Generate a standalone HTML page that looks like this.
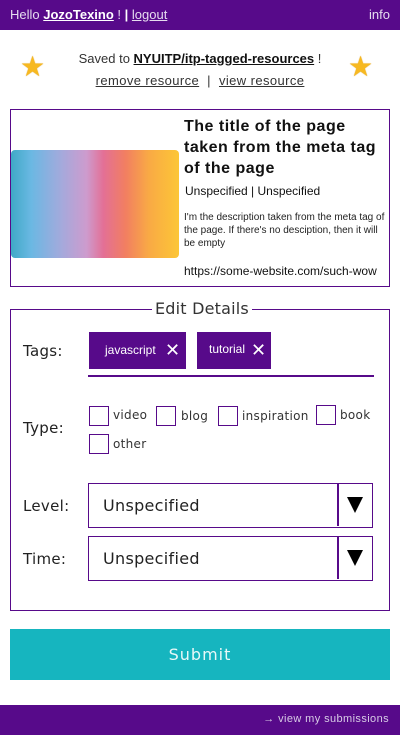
<!DOCTYPE html>
<html><head><meta charset="utf-8"><style>
*{margin:0;padding:0;box-sizing:border-box}
body{width:400px;height:735px;position:relative;background:#fff;font-family:"Liberation Sans",sans-serif;color:#222;overflow:hidden}
.a{position:absolute}
.hdr{left:0;top:0;width:400px;height:30px;background:#570a8a;color:#e6dcef;font-size:13px}
.ftr{left:0;top:705px;width:400px;height:30px;background:#570a8a;color:#d8cce6;font-size:11px}
.star{font-size:28px;color:#f7b921;text-shadow:0 0 1px #d08a00}
u{text-decoration:underline}
.box{border:1px solid #570a8a}
.chip{background:#570a8a;color:#fff;font-size:12px;height:37px;line-height:37px}
.cb{width:20px;height:20px;border:1.5px solid #570a8a}
.lbl{font-size:15px;color:#222;font-family:"DejaVu Sans",sans-serif;letter-spacing:.3px}
.opt{font-size:12px;color:#333;font-family:"DejaVu Sans",sans-serif;letter-spacing:.3px}
.sel{border:1.5px solid #570a8a;height:45px}
.tri{position:absolute;left:258px;top:13px;width:0;height:0;border-left:8px solid transparent;border-right:8px solid transparent;border-top:16px solid #000}
</style></head><body>
<div class="a hdr"><span class="a" style="left:10px;top:7px">Hello <b style="color:#fff;text-decoration:underline">JozoTexino</b> ! <b style="color:#fff">|</b> <u>logout</u></span><span class="a" style="right:10px;top:7px">info</span></div>
<div class="a star" style="left:20px;top:50px">★</div>
<div class="a star" style="left:348px;top:50px">★</div>
<div class="a" style="left:0;width:400px;top:51px;text-align:center;font-size:13px;color:#333">Saved to <b style="color:#111;text-decoration:underline">NYUITP/itp-tagged-resources</b> !</div>
<div class="a" style="left:0;width:400px;top:73px;text-align:center;font-size:13px;color:#333;letter-spacing:.4px"><u>remove resource</u> &nbsp;|&nbsp; <u>view resource</u></div>
<div class="a box" style="left:10px;top:109px;width:380px;height:178px"></div>
<div class="a" style="left:11px;top:150px;width:168px;height:108px;background:linear-gradient(90deg,#2aa0c0 0%,#5ab0e0 12%,#9aa0d8 30%,#c890c8 45%,#e0608a 55%,#f07050 68%,#f8a030 82%,#fcc020 100%);border-radius:4px;opacity:.9"></div>
<div class="a" style="left:184px;top:116px;width:200px;font-size:16px;font-weight:bold;line-height:21px;color:#111;letter-spacing:.5px">The title of the page taken from the meta tag of the page</div>
<div class="a" style="left:185px;top:184px;font-size:12px;color:#111">Unspecified | Unspecified</div>
<div class="a" style="left:184px;top:211px;width:205px;font-size:10px;line-height:13px;color:#222">I'm the description taken from the meta tag of the page. If there's no desciption, then it will be empty</div>
<div class="a" style="left:184px;top:264px;font-size:12px;color:#111">https://some-website.com/such-wow</div>
<div class="a box" style="left:10px;top:309px;width:380px;height:302px"></div>
<div class="a" style="left:152px;top:299px;background:#fff;padding:0 3px;font-size:16px;color:#333;font-family:'DejaVu Sans',sans-serif;letter-spacing:.2px">Edit Details</div>
<div class="a lbl" style="left:23px;top:342px">Tags:</div>
<div class="a chip" style="left:89px;top:332px;width:97px;padding-left:16px">javascript <span style="font-size:18px;position:absolute;left:76px;top:0">✕</span></div>
<div class="a chip" style="left:197px;top:332px;width:74px;padding-left:12px;line-height:35px">tutorial <span style="font-size:18px;position:absolute;left:54px;top:1px">✕</span></div>
<div class="a" style="left:88px;top:375px;width:286px;height:1.5px;background:#570a8a"></div>
<div class="a lbl" style="left:23px;top:419px">Type:</div>
<div class="a cb" style="left:89px;top:406px"></div><div class="a opt" style="left:113px;top:408px">video</div>
<div class="a cb" style="left:156px;top:406px"></div><div class="a opt" style="left:181px;top:409px">blog</div>
<div class="a cb" style="left:218px;top:406px"></div><div class="a opt" style="left:242px;top:409px">inspiration</div>
<div class="a cb" style="left:316px;top:405px"></div><div class="a opt" style="left:340px;top:408px">book</div>
<div class="a cb" style="left:89px;top:434px"></div><div class="a opt" style="left:113px;top:437px">other</div>
<div class="a lbl" style="left:23px;top:497px">Level:</div>
<div class="a sel" style="left:88px;top:483px;width:285px"><div class="a" style="left:248px;top:0;width:1.5px;height:42px;background:#570a8a"></div><span class="a lbl" style="left:14px;top:12px;font-size:16px">Unspecified</span><div class="tri"></div></div>
<div class="a lbl" style="left:23px;top:550px">Time:</div>
<div class="a sel" style="left:88px;top:536px;width:285px"><div class="a" style="left:248px;top:0;width:1.5px;height:42px;background:#570a8a"></div><span class="a lbl" style="left:14px;top:12px;font-size:16px">Unspecified</span><div class="tri"></div></div>
<div class="a" style="left:10px;top:629px;width:380px;height:51px;background:#16b5bf;color:#e8f8f8;font-size:16px;text-align:center;line-height:51px;letter-spacing:1px;font-family:'DejaVu Sans',sans-serif">Submit</div>
<div class="a ftr"><span class="a" style="right:11px;top:8px;letter-spacing:.4px">→ view my submissions</span></div>
</body></html>
